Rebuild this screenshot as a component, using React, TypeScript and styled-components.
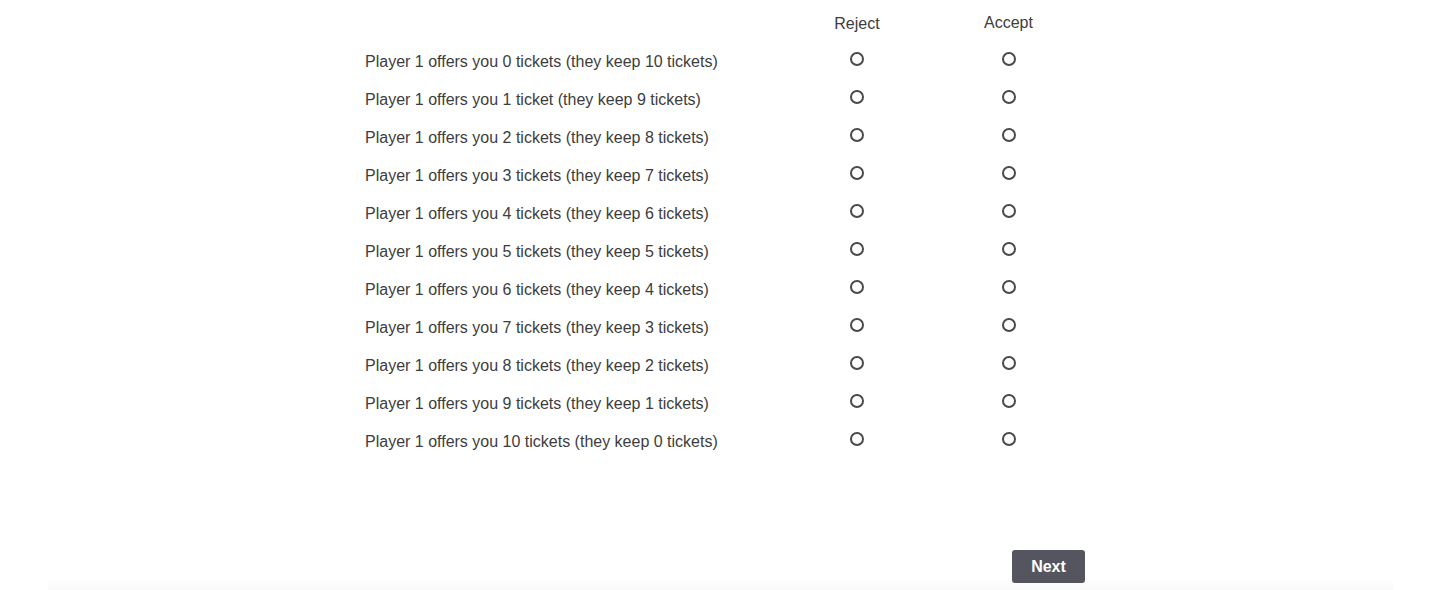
import React from 'react';
import styled, { createGlobalStyle } from 'styled-components';

const GlobalStyle = createGlobalStyle`
  body {
    margin: 0;
    background: #ffffff;
    font-family: "Liberation Sans", Arial, sans-serif;
    color: #3d3d3d;
  }
`;

const Page = styled.div`
  height: 590px;
  overflow: hidden;
  display: flex;
  flex-direction: column;
  align-items: center;
`;

const Form = styled.div`
  width: 730px;
  padding-top: 5px;
`;

const Grid = styled.div`
  display: grid;
  grid-template-columns: 427px 150px 153px;
  grid-auto-rows: 38px;
`;

const HeaderCell = styled.div<{ $offset?: number }>`
  display: flex;
  align-items: center;
  justify-content: center;
  font-size: 16px;
  transform: translateY(${(p) => p.$offset ?? 0}px);
`;

const Label = styled.div`
  display: flex;
  align-items: center;
  padding-left: 10px;
  font-size: 16px;
  white-space: nowrap;
`;

const RadioCell = styled.label`
  display: flex;
  align-items: center;
  justify-content: center;
  padding-bottom: 6px;
`;

const Radio = styled.input`
  appearance: none;
  margin: 0;
  width: 14px;
  height: 14px;
  border: 2px solid #4a4a4a;
  border-radius: 50%;
  background: #fff;
  cursor: pointer;

  &:checked {
    background: radial-gradient(circle, #4a4a4a 0 3px, #fff 3.5px);
  }
`;

const Footer = styled.div`
  width: 730px;
  margin-top: 89px;
  display: flex;
  justify-content: flex-end;
`;

const NextButton = styled.button`
  width: 73px;
  height: 33px;
  border: none;
  border-radius: 3px;
  background: #55555f;
  color: #ffffff;
  font-family: "Liberation Sans", Arial, sans-serif;
  font-weight: bold;
  font-size: 16px;
  cursor: pointer;
`;

const Shade = styled.div`
  width: 1345px;
  height: 16px;
  margin-top: -6px;
  background: linear-gradient(to bottom, rgba(0, 0, 0, 0) 0%, rgba(0, 0, 0, 0.025) 100%);
`;

const offers = Array.from({ length: 11 }, (_, i) => i);

export default function App() {
  const [choices, setChoices] = React.useState<Record<number, string>>({});

  return (
    <Page>
      <GlobalStyle />
      <Form>
        <Grid>
          <div />
          <HeaderCell>Reject</HeaderCell>
          <HeaderCell $offset={-1}>Accept</HeaderCell>
          {offers.map((n) => (
            <React.Fragment key={n}>
              <Label>
                Player 1 offers you {n} {n === 1 ? 'ticket' : 'tickets'} (they keep {10 - n} tickets)
              </Label>
              {['reject', 'accept'].map((v) => (
                <RadioCell key={v}>
                  <Radio
                    type="radio"
                    name={`offer-${n}`}
                    checked={choices[n] === v}
                    onChange={() => setChoices({ ...choices, [n]: v })}
                  />
                </RadioCell>
              ))}
            </React.Fragment>
          ))}
        </Grid>
      </Form>
      <Footer>
        <NextButton>Next</NextButton>
      </Footer>
      <Shade />
    </Page>
  );
}
